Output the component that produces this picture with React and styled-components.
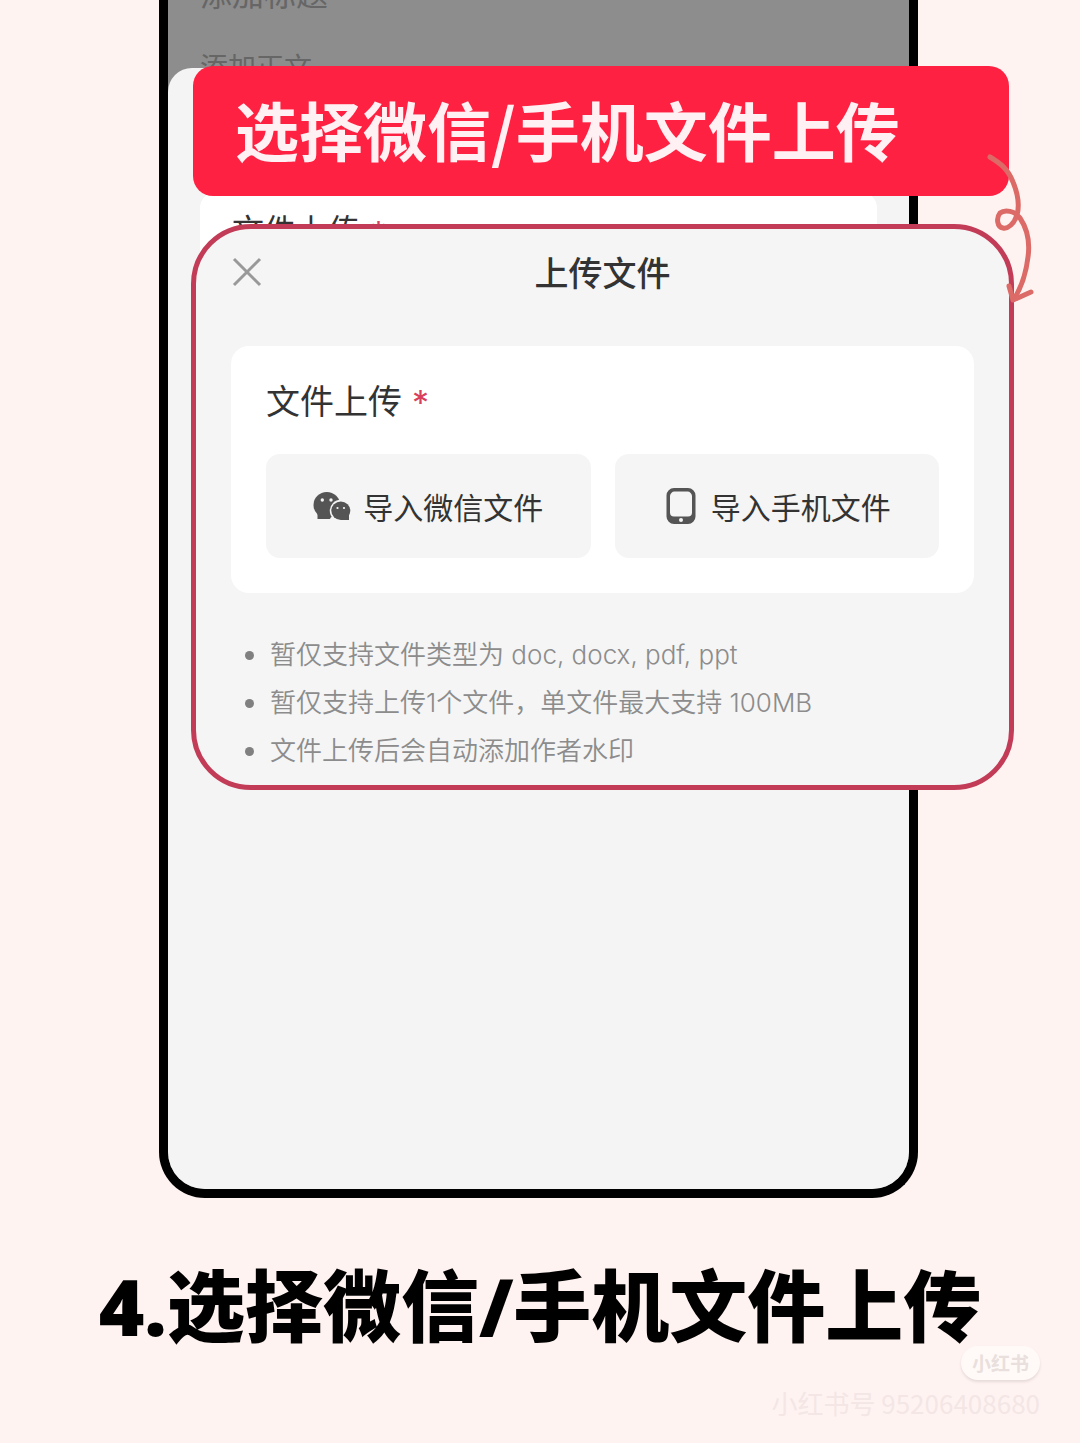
import styled, { createGlobalStyle } from 'styled-components';

const GlobalStyle = createGlobalStyle`
    * {
        box-sizing: border-box;
    }

    body {
        margin: 0;
        background: #fff3f2;
        color: #333;
        font-family: 'Noto Sans CJK SC', sans-serif;
        overflow-x: hidden;
    }
`;

const Page = styled.main`
    display: flex;
    flex-direction: column;
    min-height: 100vh;
`;

/* the phone and the callouts share one row, the callouts stick out on the right */
const Stage = styled.div`
    display: grid;
    grid-template-columns: 159fr 32fr 727fr 96fr 66fr;
`;

const Phone = styled.div`
    grid-column: 2 / 4;
    grid-row: 1;
    display: flex;
    flex-direction: column;
    min-height: 83vh;
    overflow: hidden;
    background: #8d8d8d;
    border: 9px solid #000;
    border-top: 0;
    border-radius: 0 0 46px 46px;
`;

const Draft = styled.div`
    display: flex;
    flex-direction: column;
    justify-content: flex-end;
    gap: 40px;
    height: 80px;
    margin-bottom: -12px;
    padding-left: 32px;
    color: #666;
`;

const DraftTitle = styled.div`
    font-size: 32px;
    line-height: 40px;
`;

const DraftBody = styled.div`
    font-size: 28px;
    line-height: 28px;
`;

const Sheet = styled.div`
    position: relative;
    flex: 1;
    padding: 124px 32px 0;
    background: #f4f4f4;
    border-radius: 24px 24px 0 0;
`;

const SheetCard = styled.div`
    display: flex;
    gap: 10px;
    padding: 16px 32px;
    background: #fff;
    border-radius: 16px;
    font-size: 32px;
    line-height: 40px;
`;

const Callouts = styled.div`
    position: relative;
    grid-column: 3 / 5;
    grid-row: 1;
    display: flex;
    flex-direction: column;
    align-self: start;
    gap: 28px;
    padding-top: 66px;
`;

const Banner = styled.h1`
    margin: 0 5px 0 2px;
    padding: 22px 42px 28px;
    background: #ff2141;
    border-radius: 20px;
    color: #fff1f3;
    font-size: 64px;
    font-weight: 700;
    line-height: 80px;
    white-space: nowrap;
`;

const Dialog = styled.section`
    padding: 16px 35px 10px;
    background: #f5f5f5;
    border: 5px solid #c23c58;
    border-radius: 60px;
`;

const DialogHeader = styled.header`
    display: grid;
    grid-template-columns: 32px 1fr 32px;
    align-items: center;
    margin-bottom: 47px;
`;

const CloseButton = styled.button`
    display: flex;
    padding: 0;
    background: none;
    border: 0;
    color: #999;
    cursor: pointer;
`;

const DialogTitle = styled.h2`
    margin: 0;
    font-size: 34px;
    font-weight: 500;
    line-height: 54px;
    text-align: center;
`;

const Card = styled.div`
    padding: 30px 35px 35px;
    background: #fff;
    border-radius: 18px;
`;

const Label = styled.h3`
    display: flex;
    align-items: center;
    gap: 10px;
    margin: 0 0 30px;
    font-size: 34px;
    font-weight: 400;
    line-height: 48px;
`;

const Required = styled.span`
    padding-top: 6px;
    color: #d8405c;
    font-family: Inter, sans-serif;
    font-size: 34px;
    line-height: 40px;
`;

const Buttons = styled.div`
    display: grid;
    grid-template-columns: 1fr 1fr;
    gap: 24px;
`;

const ImportButton = styled.button`
    display: flex;
    align-items: center;
    justify-content: center;
    gap: 12px;
    padding: 28px 0;
    background: #f5f5f5;
    border: 0;
    border-radius: 14px;
    color: #333;
    font-family: inherit;
    font-size: 30px;
    line-height: 48px;
    white-space: nowrap;
    cursor: pointer;
`;

const Notes = styled.ul`
    margin: 38px 0 0;
    padding: 0;
    list-style: none;
    color: #8c8c8c;
    font-family: Inter, 'Noto Sans CJK SC', sans-serif;
    font-size: 26px;
    font-weight: 350;
    line-height: 48px;
`;

const Note = styled.li`
    display: flex;
    align-items: center;
    gap: 16px;
    padding-left: 14px;

    &::before {
        content: '';
        width: 9px;
        height: 9px;
        background: #808080;
        border-radius: 50%;
    }
`;

const Arrow = styled.svg`
    position: absolute;
    top: 150px;
    right: -22px;
`;

const Caption = styled.p`
    margin: 68px 0 0;
    color: #000;
    font-family: 'Open Sans', 'Noto Sans CJK SC', sans-serif;
    font-size: 78px;
    font-weight: 900;
    line-height: 80px;
    text-align: center;
    white-space: nowrap;
`;

const Footer = styled.footer`
    display: flex;
    flex-direction: column;
    align-items: flex-end;
    gap: 8px;
    padding-right: 40px;
`;

const Badge = styled.span`
    padding: 0 11px;
    background: #fffaf8;
    border-radius: 17px;
    box-shadow: 0 2px 3px #e6dad8;
    color: #e9dfdd;
    font-size: 19px;
    font-weight: 700;
    line-height: 34px;
`;

const Account = styled.span`
    color: #f3e6e5;
    font-size: 26px;
    line-height: 30px;
`;

const CloseIcon = () => (
    <svg width='32' height='32' viewBox='0 0 32 32' fill='none' aria-hidden='true'>
        <path
            d='M3 3 29 29M29 3 3 29'
            stroke='currentColor'
            strokeWidth='3'
        />
    </svg>
);

const WechatIcon = () => (
    <svg width='38' height='32' viewBox='0 0 38 32' aria-hidden='true'>
        <ellipse cx='13.8' cy='15' rx='13.3' ry='13' fill='#555' />
        <path d='M4.500 20V29H17L20 22Z' fill='#555' />
        <circle cx='27.8' cy='20.8' r='11' fill='#f5f5f5' />
        <ellipse cx='27.8' cy='20.8' rx='9.500' ry='9.200' fill='#555' />
        <path d='M28 24 36 22V30H28Z' fill='#555' />
        <circle cx='9.300' cy='10' r='1.700' fill='#f5f5f5' />
        <circle cx='18' cy='10' r='1.700' fill='#f5f5f5' />
        <circle cx='24.500' cy='18' r='1.100' fill='#f5f5f5' />
        <circle cx='31' cy='18' r='1.100' fill='#f5f5f5' />
    </svg>
);

const PhoneIcon = () => (
    <svg width='36' height='38' viewBox='0 0 36 38' aria-hidden='true'>
        <path
            fillRule='evenodd'
            d='M11 1H25a7.500 7.500 0 0 1 7.500 7.500V29.500A7.500 7.500 0 0 1 25 37H11a7.500 7.500 0 0 1-7.500-7.500V8.500A7.500 7.500 0 0 1 11 1ZM11.500 4.600A4.500 4.500 0 0 0 7 9V25.500A4 4 0 0 0 11 29.500H25A4 4 0 0 0 29 25.500V9A4.500 4.500 0 0 0 24.500 4.600Z'
            fill='#555'
        />
        <circle cx='18' cy='33' r='2' fill='#f5f5f5' />
    </svg>
);

const CurlyArrow = () => (
    <Arrow width='52' height='156' viewBox='0 0 52 156' fill='none' aria-hidden='true'>
        <g stroke='#dc6a66' strokeWidth='5' strokeLinecap='round' strokeLinejoin='round'>
            <path d='M6 7C16 13 24 19 29 32C34 44 36 54 33 65C30 74 24 79 19 78C13 77 12 68 16 63C21 59 31 61 36 68C44 80 46 93 44 107C42 124 37 138 30 149' />
            <path d='M25 136 29 150 47 142' />
        </g>
    </Arrow>
);

const App = () => {
    return (
        <>
            <GlobalStyle />
            <Page>
                <Stage>
                    <Phone>
                        <Draft>
                            <DraftTitle>添加标题</DraftTitle>
                            <DraftBody>添加正文</DraftBody>
                        </Draft>
                        <Sheet>
                            <SheetCard>
                                文件上传 <Required>*</Required>
                            </SheetCard>
                        </Sheet>
                    </Phone>
                    <Callouts>
                        <Banner>选择微信/手机文件上传</Banner>
                        <Dialog>
                            <DialogHeader>
                                <CloseButton type='button' aria-label='关闭'>
                                    <CloseIcon />
                                </CloseButton>
                                <DialogTitle>上传文件</DialogTitle>
                            </DialogHeader>
                            <Card>
                                <Label>
                                    文件上传 <Required>*</Required>
                                </Label>
                                <Buttons>
                                    <ImportButton type='button'>
                                        <WechatIcon />
                                        导入微信文件
                                    </ImportButton>
                                    <ImportButton type='button'>
                                        <PhoneIcon />
                                        导入手机文件
                                    </ImportButton>
                                </Buttons>
                            </Card>
                            <Notes>
                                <Note>暂仅支持文件类型为 doc, docx, pdf, ppt</Note>
                                <Note>暂仅支持上传1个文件，单文件最大支持 100MB</Note>
                                <Note>文件上传后会自动添加作者水印</Note>
                            </Notes>
                        </Dialog>
                        <CurlyArrow />
                    </Callouts>
                </Stage>
                <Caption>4.选择微信/手机文件上传</Caption>
                <Footer>
                    <Badge>小红书</Badge>
                    <Account>小红书号 95206408680</Account>
                </Footer>
            </Page>
        </>
    );
};

export default App;
